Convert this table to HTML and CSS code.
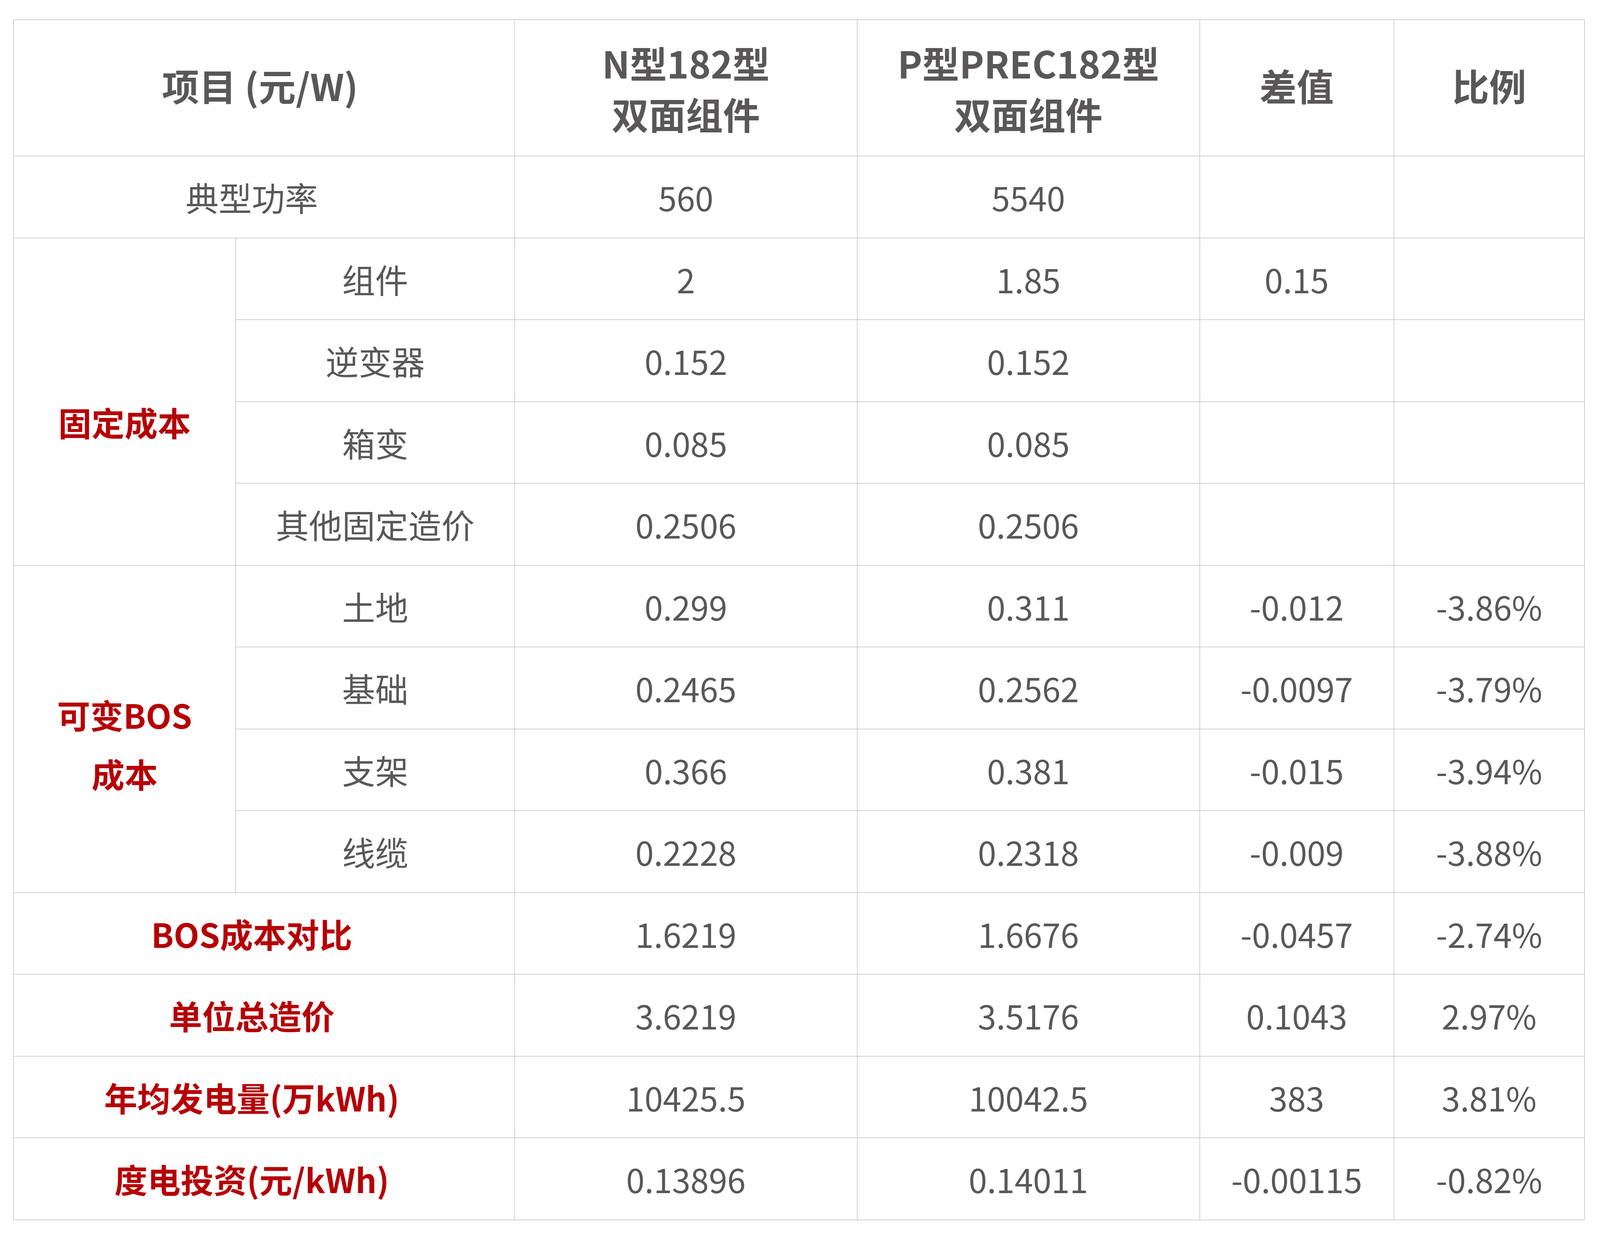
FILE: index.html
```html
<!DOCTYPE html>
<html lang="zh-CN">
<head>
<meta charset="utf-8">
<title>N型与P型组件成本对比</title>
<link rel="stylesheet" href="styles.css">
</head>
<body>
<table class="cost-table">
  <colgroup>
    <col class="c1"><col class="c2"><col class="c3"><col class="c4"><col class="c5"><col class="c6">
  </colgroup>
  <thead>
    <tr class="head-row">
      <th colspan="2" class="merged-head single">项目 (元/W)</th>
      <th class="two-line">N型182型<br>双面组件</th>
      <th class="two-line">P型PREC182型<br>双面组件</th>
      <th class="single">差值</th>
      <th class="single">比例</th>
    </tr>
  </thead>
  <tbody>
    <tr>
      <td colspan="2" class="merged">典型功率</td>
      <td>560</td><td>5540</td><td></td><td></td>
    </tr>
    <tr>
      <td rowspan="4" class="red fixed">固定成本</td>
      <td>组件</td><td>2</td><td>1.85</td><td>0.15</td><td></td>
    </tr>
    <tr><td>逆变器</td><td>0.152</td><td>0.152</td><td></td><td></td></tr>
    <tr><td>箱变</td><td>0.085</td><td>0.085</td><td></td><td></td></tr>
    <tr><td>其他固定造价</td><td>0.2506</td><td>0.2506</td><td></td><td></td></tr>
    <tr>
      <td rowspan="4" class="red tall">可变BOS<br>成本</td>
      <td>土地</td><td>0.299</td><td>0.311</td><td>-0.012</td><td>-3.86%</td>
    </tr>
    <tr><td>基础</td><td>0.2465</td><td>0.2562</td><td>-0.0097</td><td>-3.79%</td></tr>
    <tr><td>支架</td><td>0.366</td><td>0.381</td><td>-0.015</td><td>-3.94%</td></tr>
    <tr><td>线缆</td><td>0.2228</td><td>0.2318</td><td>-0.009</td><td>-3.88%</td></tr>
    <tr>
      <td colspan="2" class="merged red">BOS成本对比</td>
      <td>1.6219</td><td>1.6676</td><td>-0.0457</td><td>-2.74%</td>
    </tr>
    <tr>
      <td colspan="2" class="merged red">单位总造价</td>
      <td>3.6219</td><td>3.5176</td><td>0.1043</td><td>2.97%</td>
    </tr>
    <tr>
      <td colspan="2" class="merged red">年均发电量(万kWh)</td>
      <td>10425.5</td><td>10042.5</td><td>383</td><td>3.81%</td>
    </tr>
    <tr>
      <td colspan="2" class="merged red">度电投资(元/kWh)</td>
      <td>0.13896</td><td>0.14011</td><td>-0.00115</td><td>-0.82%</td>
    </tr>
  </tbody>
</table>
</body>
</html>
```

FILE: styles.css
```css
:root {
  --u: calc(100vw / 4831);
  --v: calc(100vh / 3175);
}

html, body {
  margin: 0;
  padding: 0;
  background: #ffffff;
  overflow: hidden;
}

body {
  height: 100vh;
  box-sizing: border-box;
  padding: calc(var(--v) * 50) 0 0 calc(var(--u) * 40);
  font-family: "Noto Sans CJK SC", "Noto Sans", sans-serif;
  color: #595757;
}

.cost-table {
  border-collapse: collapse;
  table-layout: fixed;
  width: calc(var(--u) * 4745);
}

.c1 { width: calc(var(--u) * 671); }
.c2 { width: calc(var(--u) * 842); }
.c3 { width: calc(var(--u) * 1034); }
.c4 { width: calc(var(--u) * 1034); }
.c5 { width: calc(var(--u) * 586); }
.c6 { width: calc(var(--u) * 576); }

.cost-table th,
.cost-table td {
  border: calc(var(--u) * 2.2) solid #a8a8a8;
  padding: 0;
  text-align: center;
  vertical-align: middle;
  white-space: nowrap;
}

.cost-table th {
  font-size: calc(var(--u) * 112);
  font-weight: 700;
  line-height: calc(var(--v) * 131);
}

.cost-table th.single {
  padding-bottom: calc(var(--v) * 16);
}

.cost-table th.merged-head {
  padding-right: calc(var(--u) * 24);
}

.cost-table td {
  font-size: calc(var(--u) * 100);
  font-weight: 400;
  line-height: calc(var(--v) * 130);
}

.head-row {
  height: calc(var(--v) * 349);
}

.cost-table tbody tr {
  height: calc(var(--v) * 209.5);
}

.cost-table .merged {
  padding-right: calc(var(--u) * 74);
}

.cost-table .red {
  color: #b50005;
  font-weight: 700;
}

.cost-table .fixed {
  padding-top: calc(var(--v) * 104);
}

.cost-table .tall {
  line-height: calc(var(--v) * 151);
  padding-top: calc(var(--v) * 78);
}
```
